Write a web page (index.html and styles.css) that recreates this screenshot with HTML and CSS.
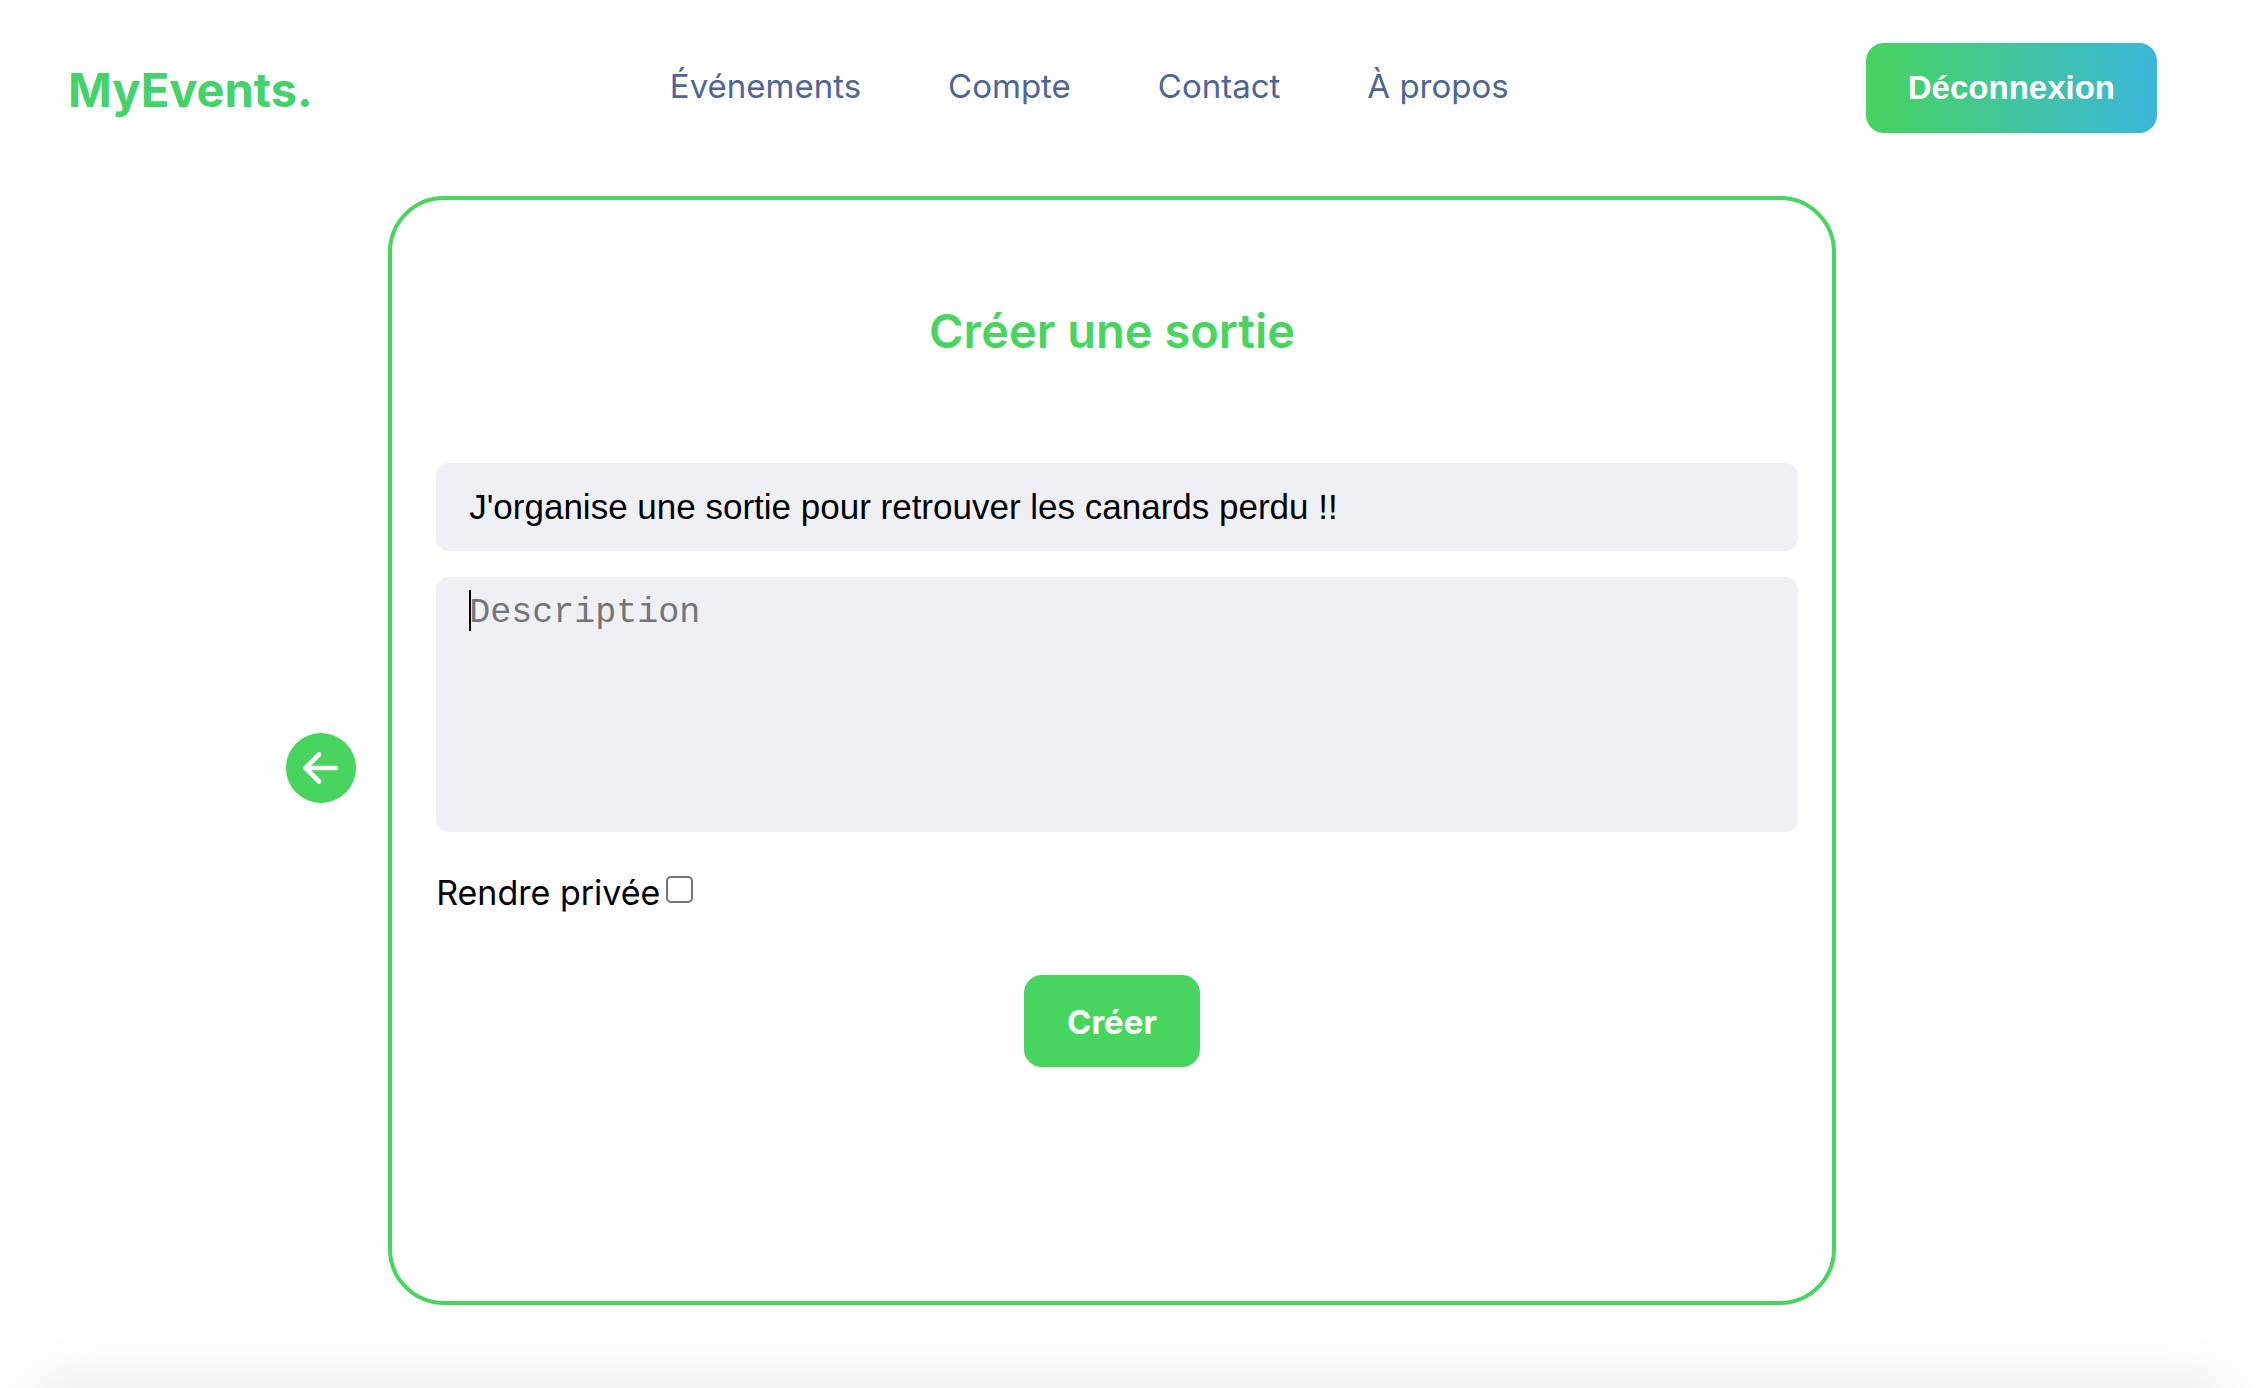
FILE: index.html
```html
<!DOCTYPE html>
<html lang="fr">
<head>
  <meta charset="utf-8">
  <meta name="viewport" content="width=device-width, initial-scale=1">
  <title>MyEvents. – Créer une sortie</title>
  <link rel="stylesheet" href="styles.css">
</head>
<body>
  <header class="header">
    <a class="logo" href="#">MyEvents.</a>
    <nav class="nav">
      <a class="nav-link" href="#">Événements</a>
      <a class="nav-link" href="#">Compte</a>
      <a class="nav-link" href="#">Contact</a>
      <a class="nav-link" href="#">À propos</a>
    </nav>
    <button class="button button-logout" type="button">Déconnexion</button>
  </header>

  <main class="main">
    <button class="back" type="button" aria-label="Retour">
      <svg class="back-icon" viewBox="0 0 70 70" aria-hidden="true">
        <path d="M50 35H20M33 21.500L19.500 35L33 48.500" fill="none" stroke="currentColor" stroke-width="4.600" stroke-linecap="round" stroke-linejoin="round"/>
      </svg>
    </button>
    <form class="card">
      <h1 class="title">Créer une sortie</h1>
      <input class="field" type="text" aria-label="Titre" value="J'organise une sortie pour retrouver les canards perdu !!">
      <div class="description">
        <textarea class="field field-area" aria-label="Description" placeholder="Description"></textarea>
        <span class="caret"></span>
      </div>
      <div class="private">
        <label for="private">Rendre privée</label>
        <input class="checkbox" id="private" type="checkbox">
      </div>
      <button class="button button-create" type="submit">Créer</button>
    </form>
  </main>

  <footer class="footer">
    <div class="footer-panel"></div>
  </footer>
</body>
</html>
```
FILE: styles.css
```css
* {
  box-sizing: border-box;
}

body {
  display: flex;
  flex-direction: column;
  min-height: 100vh;
  margin: 0;
  background: #fefefe;
  color: #000;
  font-family: Inter, "Liberation Sans", sans-serif;
}

.header {
  display: flex;
  align-items: center;
  justify-content: space-between;
  padding: 43px 105px 0 68px;
}

.logo {
  padding-top: 4px;
  color: #45d26b;
  font-size: 47px;
  font-weight: 700;
  line-height: 60px;
  text-decoration: none;
}

.nav {
  display: flex;
  gap: 87px;
  padding-bottom: 4px;
}

.nav-link {
  color: #4f6593;
  font-size: 33px;
  line-height: 40px;
  text-decoration: none;
}

.button {
  border: 0;
  border-radius: 18px;
  color: #fff;
  font-size: 33px;
  font-weight: 700;
  line-height: 40px;
}

.button-logout {
  padding: 25px 42px;
  background: linear-gradient(to right, #46d45e, #3cb6db);
  font-family: "Liberation Sans", Arial, sans-serif;
}

.main {
  display: grid;
  grid-template-columns: 70px 64vw;
  justify-content: center;
  align-items: center;
  gap: 32px;
  padding: 63px 140px 0 0;
}

.back {
  width: 70px;
  height: 70px;
  margin-top: 34px;
  padding: 0;
  border: 0;
  border-radius: 50%;
  background: #47d55f;
  color: #fff;
}

.back-icon {
  display: block;
  width: 100%;
}

.card {
  display: flex;
  flex-direction: column;
  padding: 101px 34px 234px 44px;
  border: 4px solid #47d55f;
  border-radius: 56px;
}

.title {
  margin: 0 0 102px;
  padding-right: 10px;
  color: #47d55f;
  font-size: 47px;
  font-weight: 600;
  line-height: 60px;
  text-align: center;
}

.field {
  display: block;
  width: 100%;
  height: 88px;
  padding: 0 33px;
  border: 0;
  border-radius: 13px;
  outline: 0;
  background: #eff0f6;
  color: #000;
  font-family: "Liberation Sans", Arial, sans-serif;
  font-size: 35px;
}

.description {
  position: relative;
  margin-top: 26px;
}

.field-area {
  height: 255px;
  padding: 16px 33px;
  font-family: "Liberation Mono", "Courier New", monospace;
  line-height: 40px;
  resize: none;
}

.field-area::placeholder {
  color: #757575;
}

.caret {
  position: absolute;
  top: 13px;
  left: 33px;
  width: 2px;
  height: 41px;
  background: #000;
}

.private {
  display: flex;
  align-items: center;
  gap: 6px;
  margin-top: 40px;
  font-size: 34px;
  line-height: 42px;
}

.checkbox {
  width: 27px;
  height: 27px;
  margin: 0 0 8px;
  border: 2px solid #767676;
  border-radius: 5px;
  background: #fff;
  appearance: none;
}

.checkbox:checked {
  background: #47d55f;
}

.button-create {
  align-self: center;
  margin: 61px 10px 0 0;
  padding: 27px 43px 25px;
  background: #47d55f;
  font-family: Inter, "Liberation Sans", sans-serif;
}

.footer {
  height: 83px;
  margin-top: auto;
  padding: 83px 40px 0;
  overflow: hidden;
}

.footer-panel {
  height: 100px;
  box-shadow: 0 0 60px rgba(0, 0, 0, 0.1);
}
```
